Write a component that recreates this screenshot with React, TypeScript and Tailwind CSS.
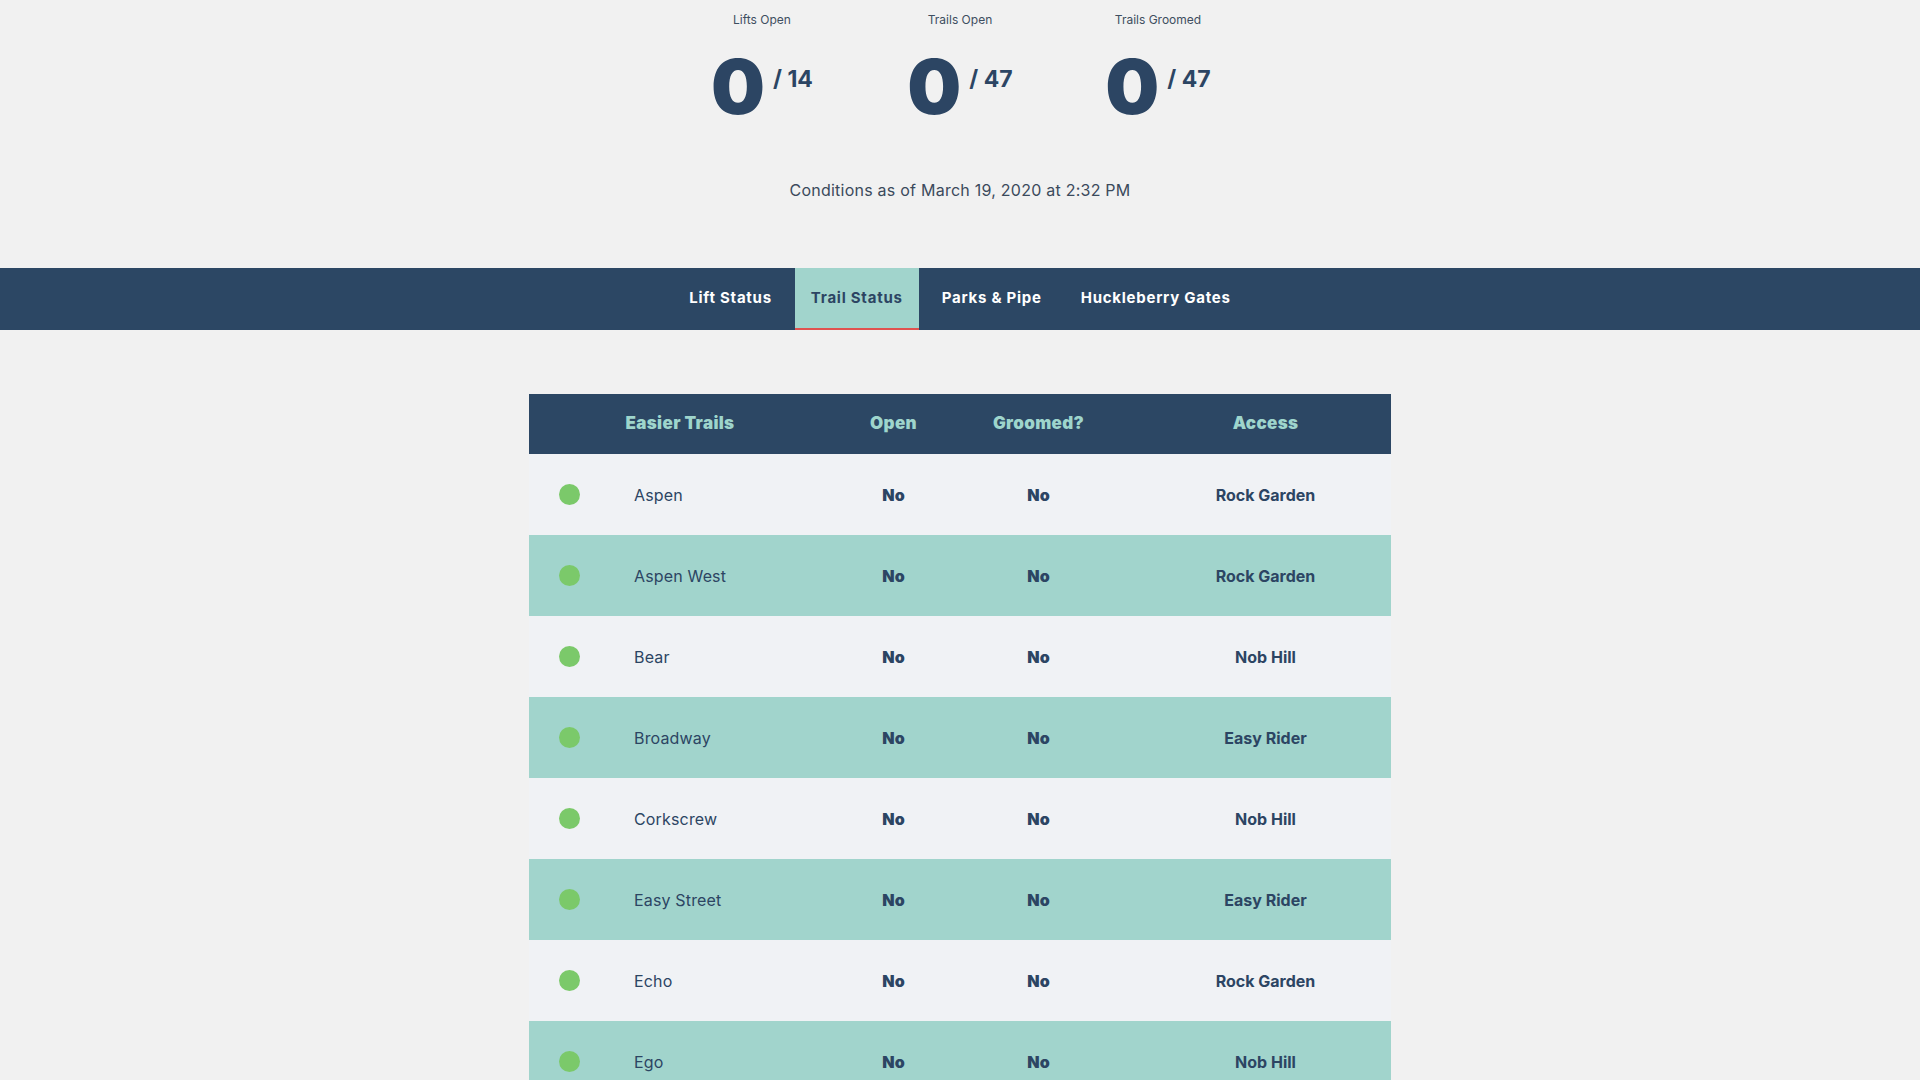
import React, { useState } from 'react';

interface Stat {
  label: string;
  open: number;
  total: number;
}

interface Trail {
  name: string;
  open: string;
  groomed: string;
  access: string;
}

const stats: Stat[] = [
  { label: 'Lifts Open', open: 0, total: 14 },
  { label: 'Trails Open', open: 0, total: 47 },
  { label: 'Trails Groomed', open: 0, total: 47 },
];

const trails: Trail[] = [
  { name: 'Aspen', open: 'No', groomed: 'No', access: 'Rock Garden' },
  { name: 'Aspen West', open: 'No', groomed: 'No', access: 'Rock Garden' },
  { name: 'Bear', open: 'No', groomed: 'No', access: 'Nob Hill' },
  { name: 'Broadway', open: 'No', groomed: 'No', access: 'Easy Rider' },
  { name: 'Corkscrew', open: 'No', groomed: 'No', access: 'Nob Hill' },
  { name: 'Easy Street', open: 'No', groomed: 'No', access: 'Easy Rider' },
  { name: 'Echo', open: 'No', groomed: 'No', access: 'Rock Garden' },
  { name: 'Ego', open: 'No', groomed: 'No', access: 'Nob Hill' },
];

const tabs = ['Lift Status', 'Trail Status', 'Parks & Pipe', 'Huckleberry Gates'];

export default function App() {
  const [tab, setTab] = useState('Trail Status');

  return (
    <div className="min-h-screen bg-[#f1f1f1] text-[#2c4563] font-['Inter','Noto_Sans',sans-serif]">
      {/* Snapshot numbers */}
      <div className="pt-[12px] flex justify-center">
        <div className="grid grid-cols-[198px_198px_198px]">
          {stats.map((s) => (
            <div key={s.label} className="flex flex-col items-center">
              <span className="text-[12px] leading-4 text-[#3e4e60]">{s.label}</span>
              <div className="flex items-start gap-[8px] mt-[20px]">
                <span className="text-[76px] leading-none font-black">{s.open}</span>
                <span className="text-[23px] leading-none font-bold mt-[20px]">/ {s.total}</span>
              </div>
            </div>
          ))}
        </div>
      </div>

      <p className="mt-[54px] text-center text-[16px] leading-6 tracking-[0.015em] text-[#3b4a5c]">
        Conditions as of March 19, 2020 at 2:32 PM
      </p>

      {/* Tabs */}
      <nav className="mt-[66px] bg-[#2c4764] h-[62px] flex justify-center gap-[7px]">
        {tabs.map((t) => (
          <button
            key={t}
            onClick={() => setTab(t)}
            className={`px-4 h-full text-[15px] font-bold tracking-[0.05em] border-b-2 ${
              tab === t ? 'bg-[#a1d4cc] text-[#2c4563] border-[#e0524f]' : 'text-white border-transparent'
            }`}
          >
            {t}
          </button>
        ))}
      </nav>

      {/* Trail table */}
      <div className="mt-[64px] mx-auto w-[862px]">
        <div className="grid grid-cols-[302px_125px_165px_1fr] h-[60px] items-center bg-[#2c4764] text-[17px] tracking-[0.02em] font-black text-[#9ed5cc]">
          <span className="text-center">Easier Trails</span>
          <span className="text-center">Open</span>
          <span className="text-center">Groomed?</span>
          <span className="text-center pl-[19px]">Access</span>
        </div>
        {trails.map((t, i) => (
          <div
            key={t.name}
            className={`grid grid-cols-[302px_125px_165px_1fr] h-[81px] items-center text-[16px] ${
              i % 2 === 0 ? 'bg-[#f0f2f5]' : 'bg-[#a1d4cc]'
            }`}
          >
            <div className="flex items-center pl-[30px]">
              <span className="w-[21px] h-[21px] rounded-full bg-[#7bc96a]" />
              <span className="ml-[54px] tracking-[0.01em]">{t.name}</span>
            </div>
            <span className="text-center font-black">{t.open}</span>
            <span className="text-center font-black">{t.groomed}</span>
            <span className="text-center pl-[19px] font-bold">{t.access}</span>
          </div>
        ))}
      </div>
      <div className="h-16" />
    </div>
  );
}
